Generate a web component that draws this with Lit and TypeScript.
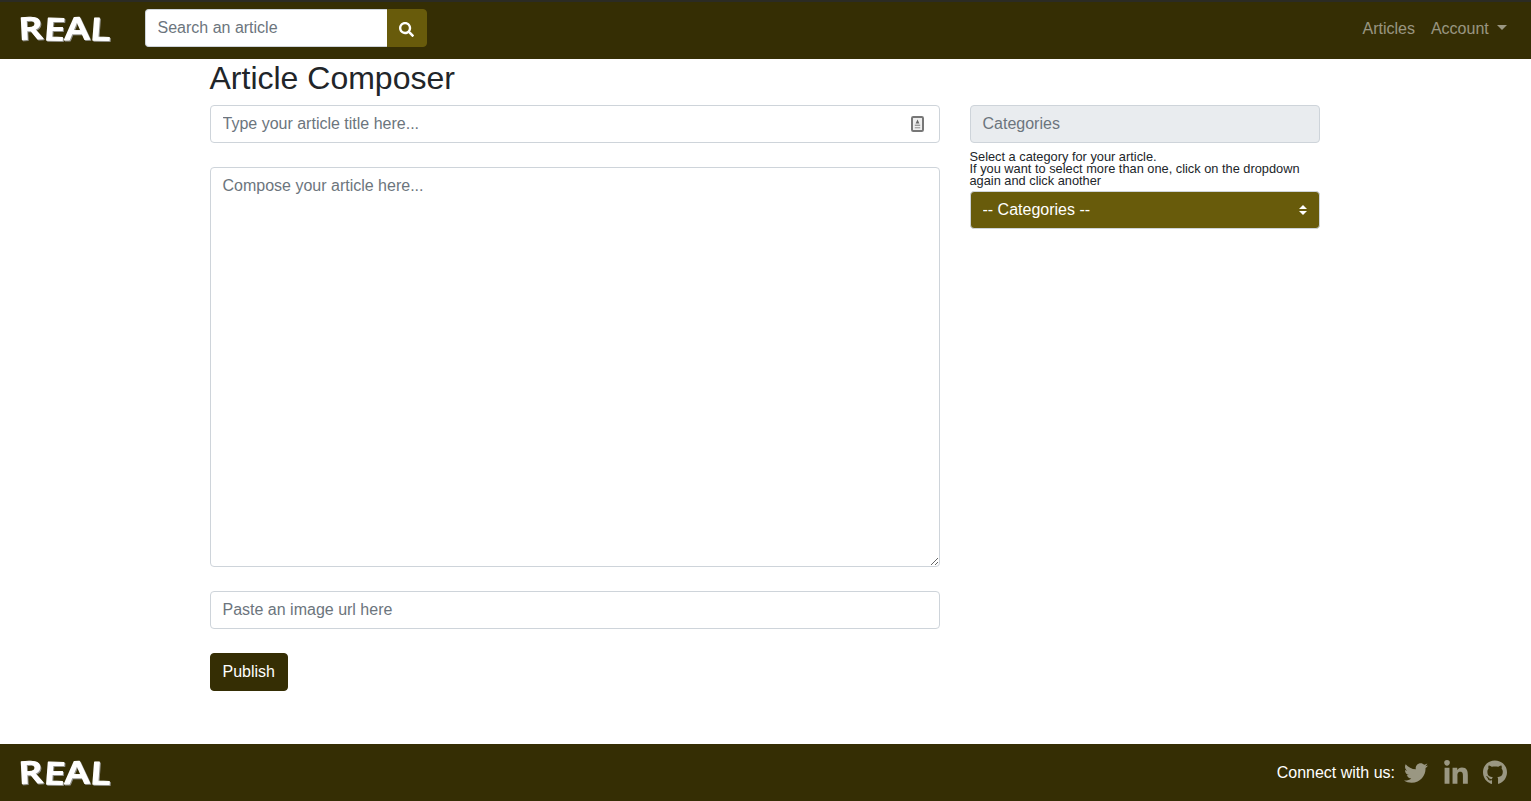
import { LitElement, html, css } from "lit";
import { customElement } from "lit/decorators.js";

@customElement("real-logo")
class RealLogo extends LitElement {
  static styles = css`
    :host { display: block; width: 92px; height: 30px; }
    svg { display: block; overflow: visible; filter: drop-shadow(1px 1.5px 0 #8f8f88); }
    text {
      font-family: "Open Sans", sans-serif;
      font-weight: 600;
      font-size: 31px;
      fill: #fff;
      stroke: #fff;
      stroke-width: 1.1px;
      stroke-linejoin: round;
      stroke-linecap: round;
    }
  `;
  render() {
    return html`<svg width="92" height="30" viewBox="0 0 92 30">
      <text x="0" y="26" textLength="91" lengthAdjust="spacingAndGlyphs" rotate="-4 2 -2 2" transform="skewX(-2)">REAL</text>
    </svg>`;
  }
}

const twitter = "M459.37 151.716c.325 4.548.325 9.097.325 13.645 0 138.72-105.583 298.558-298.558 298.558-59.452 0-114.68-17.219-161.137-47.106 8.447.974 16.568 1.299 25.34 1.299 49.055 0 94.213-16.568 130.274-44.832-46.132-.975-84.792-31.188-98.112-72.772 6.498.974 12.995 1.624 19.818 1.624 9.421 0 18.843-1.3 27.614-3.573-48.081-9.747-84.143-51.98-84.143-102.985v-1.299c13.969 7.797 30.214 12.67 47.431 13.319-28.264-18.843-46.781-51.005-46.781-87.391 0-19.492 5.197-37.36 14.294-52.954 51.655 63.675 129.3 105.258 216.365 109.807-1.624-7.797-2.599-15.918-2.599-24.04 0-57.828 46.782-104.934 104.934-104.934 30.213 0 57.502 12.67 76.67 33.137 23.715-4.548 46.456-13.32 66.599-25.34-7.798 24.366-24.366 44.833-46.132 57.827 21.117-2.273 41.584-8.122 60.426-16.243-14.292 20.791-32.161 39.308-52.628 54.253z";
const linkedin = "M100.28 448H7.4V148.9h92.88zM53.79 108.1C24.09 108.1 0 83.5 0 53.8a53.79 53.79 0 0 1 107.58 0c0 29.7-24.1 54.3-53.79 54.3zM447.9 448h-92.68V302.4c0-34.7-.7-79.2-48.29-79.2-48.29 0-55.69 37.7-55.69 76.7V448h-92.78V148.9h89.08v40.8h1.3c12.4-23.5 42.69-48.3 87.88-48.3 94 0 111.28 61.9 111.28 142.3V448z";
const github = "M165.9 397.4c0 2-2.3 3.6-5.2 3.6-3.3 0-5.6-1.6-5.6-3.6 0-2 2.3-3.6 5.2-3.6 3-.3 5.6 1.3 5.6 3.6zm-31.1-4.5c-.7 2 1.3 4.3 4.3 4.9 2.6 1 5.6 0 6.2-2s-1.3-4.3-4.3-5.2c-2.6-.7-5.5.3-6.2 2.3zm44.2-1.7c-2.9.7-4.9 2.6-4.6 4.9.3 2 2.9 3.3 5.9 2.6 2.9-.7 4.9-2.6 4.6-4.6-.3-1.9-3-3.2-5.9-2.9zM244.8 8C106.1 8 0 113.3 0 252c0 110.9 69.8 205.8 169.5 239.2 12.8 2.3 17.3-5.6 17.3-12.1 0-6.2-.3-40.4-.3-61.4 0 0-70 15-84.7-29.8 0 0-11.4-29.1-27.8-36.6 0 0-22.9-15.7 1.6-15.4 0 0 24.9 2 38.6 25.8 21.9 38.6 58.6 27.5 72.9 20.9 2.3-16 8.8-27.1 16-33.7-55.9-6.2-112.3-14.3-112.3-110.5 0-27.5 7.6-41.3 23.6-58.9-2.6-6.5-11.1-33.3 2.6-67.9 20.9-6.5 69 27 69 27 20-5.6 41.5-8.5 62.8-8.5s42.8 2.9 62.8 8.5c0 0 48.1-33.6 69-27 13.7 34.7 5.2 61.4 2.6 67.9 16 17.7 25.8 31.5 25.8 58.9 0 96.5-58.9 104.2-114.8 110.5 9.2 7.9 17 22.9 17 46.4 0 33.7-.3 75.4-.3 83.6 0 6.5 4.6 14.4 17.3 12.1C428.2 457.8 496 362.9 496 252 496 113.3 383.5 8 244.8 8z";
const search = "M505 442.7L405.3 343c-4.5-4.5-10.6-7-17-7H372c27.6-35.3 44-79.7 44-128C416 93.1 322.9 0 208 0S0 93.1 0 208s93.1 208 208 208c48.3 0 92.7-16.4 128-44v16.3c0 6.4 2.5 12.5 7 17l99.7 99.7c9.4 9.4 24.6 9.4 33.9 0l28.3-28.3c9.4-9.4 9.4-24.6.1-34zM208 336c-70.7 0-128-57.2-128-128 0-70.7 57.2-128 128-128 70.7 0 128 57.2 128 128 0 70.7-57.2 128-128 128z";

@customElement("app-root")
class AppRoot extends LitElement {
  static styles = css`
    :host {
      display: flex;
      flex-direction: column;
      min-height: 801px;
      font-family: "Liberation Sans", Arial, sans-serif;
      font-size: 16px;
      line-height: 24px;
      color: #212529;
      background: #fff;
    }
    * { box-sizing: border-box; }
    .navbar {
      height: 59px;
      background: #352e04;
      border-top: 2px solid #2b2b24;
      padding: 7px 24.25px 0 20px;
      display: flex;
      align-items: flex-start;
      flex: none;
    }
    .navbar real-logo { margin-top: 5px; }
    .search { display: flex; margin-left: 32.5px; width: 282px; height: 38px; }
    .search input {
      flex: 1;
      min-width: 0;
      border-radius: 4px 0 0 4px;
      border-right: 0;
    }
    .search button {
      width: 40px;
      border: 1px solid #685b0b;
      background: #685b0b;
      border-radius: 0 4px 4px 0;
      padding: 3px 0 0;
      display: flex;
      align-items: center;
      justify-content: center;
    }
    .search svg { width: 15px; height: 15px; fill: #fff; display: block; }
    .nav { margin-left: auto; display: flex; gap: 16px; padding-top: 8px; color: rgba(255,255,255,.5); }
    .nav span { display: inline-flex; align-items: center; }
    .caret {
      margin: -3px 0 0 8px;
      width: 0;
      height: 0;
      border-top: 5px solid rgba(255,255,255,.5);
      border-left: 5px solid transparent;
      border-right: 5px solid transparent;
    }
    input, textarea, select {
      font-family: inherit;
      font-size: 16px;
      line-height: 24px;
      color: #495057;
      background: #fff;
      border: 1px solid #ced4da;
      border-radius: 4px;
      padding: 6px 12px;
      display: block;
      width: 100%;
      margin: 0;
      outline: none;
    }
    input { height: 38px; }
    ::placeholder { color: #6c757d; opacity: 1; }
    main {
      flex: 1;
      width: 1110px;
      margin-left: 209.5px;
    }
    h2 { margin: 0 0 8px; font-size: 32px; line-height: 38.4px; font-weight: 500; }
    .row { display: grid; grid-template-columns: 730px 350px; column-gap: 30px; }
    .group { margin-bottom: 24px; }
    .title-wrap { position: relative; }
    .title-wrap input { padding-right: 40px; }
    .contact { position: absolute; left: 701px; top: 11px; width: 13px; height: 16px; display: block; }
    textarea { height: 400px; resize: vertical; }
    button.publish {
      font-family: inherit;
      font-size: 16px;
      line-height: 24px;
      color: #fff;
      background: #352e04;
      border: 1px solid #352e04;
      border-radius: 4px;
      padding: 6px 12px;
      height: 38px;
      display: block;
    }
    .cat-label {
      height: 38px;
      background: #e9ecef;
      border: 1px solid #ced4da;
      border-radius: 4px;
      padding: 6px 12px;
      color: #6c757d;
    }
    .help { font-size: 12.8px; line-height: 12px; margin: 8px 0 4px; color: #212529; }
    select {
      appearance: none;
      height: 38px;
      color: #fff;
      background: #685b0b url("data:image/svg+xml,%3csvg xmlns='http://www.w3.org/2000/svg' width='4' height='5' viewBox='0 0 4 5'%3e%3cpath fill='%23fff' d='M2 0L0 2h4zm0 5L0 3h4z'/%3e%3c/svg%3e") no-repeat right 12px center / 8px 10px;
      padding-right: 28px;
    }
    footer {
      height: 57px;
      flex: none;
      background: #352e04;
      padding: 0 24px 0 20px;
      display: flex;
      align-items: center;
      justify-content: space-between;
    }
    .connect { display: flex; align-items: center; color: #fff; }
    .connect svg { fill: rgba(255,255,255,.5); display: block; }
    .connect .tw { width: 24px; height: 24px; margin-left: 9px; }
    .connect .li { width: 24px; height: 27px; margin: 1px 0 0 16px; }
    .connect .gh { width: 24px; height: 25px; margin-left: 15px; }
  `;

  render() {
    return html`
      <header class="navbar">
        <real-logo></real-logo>
        <form class="search">
          <input type="text" placeholder="Search an article" />
          <button type="button" aria-label="Search">
            <svg viewBox="0 0 512 512"><path d="${search}"></path></svg>
          </button>
        </form>
        <nav class="nav">
          <span>Articles</span>
          <span>Account<i class="caret"></i></span>
        </nav>
      </header>
      <main>
        <h2>Article Composer</h2>
        <div class="row">
          <div>
            <div class="group title-wrap">
              <input type="text" placeholder="Type your article title here..." />
              <svg class="contact" viewBox="0 0 13 16" aria-hidden="true">
                <rect x="1" y="1" width="11" height="14" rx="1.2" fill="#eee" stroke="#777" stroke-width="2"></rect>
                <path d="M6.5 3.4 8.4 7.6H4.6Z" fill="#666"></path>
                <rect x="3.8" y="8.6" width="5.4" height="1.4" fill="#999"></rect>
                <rect x="3.8" y="11" width="5.4" height="1.4" fill="#aaa"></rect>
              </svg>
            </div>
            <div class="group">
              <textarea placeholder="Compose your article here..."></textarea>
            </div>
            <div class="group">
              <input type="text" placeholder="Paste an image url here" />
            </div>
            <button class="publish" type="button">Publish</button>
          </div>
          <aside>
            <div class="cat-label">Categories</div>
            <div class="help">Select a category for your article.<br />If you want to select more than one, click on the dropdown again and click another</div>
            <select><option>-- Categories --</option></select>
          </aside>
        </div>
      </main>
      <footer>
        <real-logo></real-logo>
        <div class="connect">
          <span>Connect with us:</span>
          <svg class="tw" viewBox="0 0 512 512"><path d="${twitter}"></path></svg>
          <svg class="li" viewBox="0 0 448 512"><path d="${linkedin}"></path></svg>
          <svg class="gh" viewBox="0 0 496 512"><path d="${github}"></path></svg>
        </div>
      </footer>
    `;
  }
}
